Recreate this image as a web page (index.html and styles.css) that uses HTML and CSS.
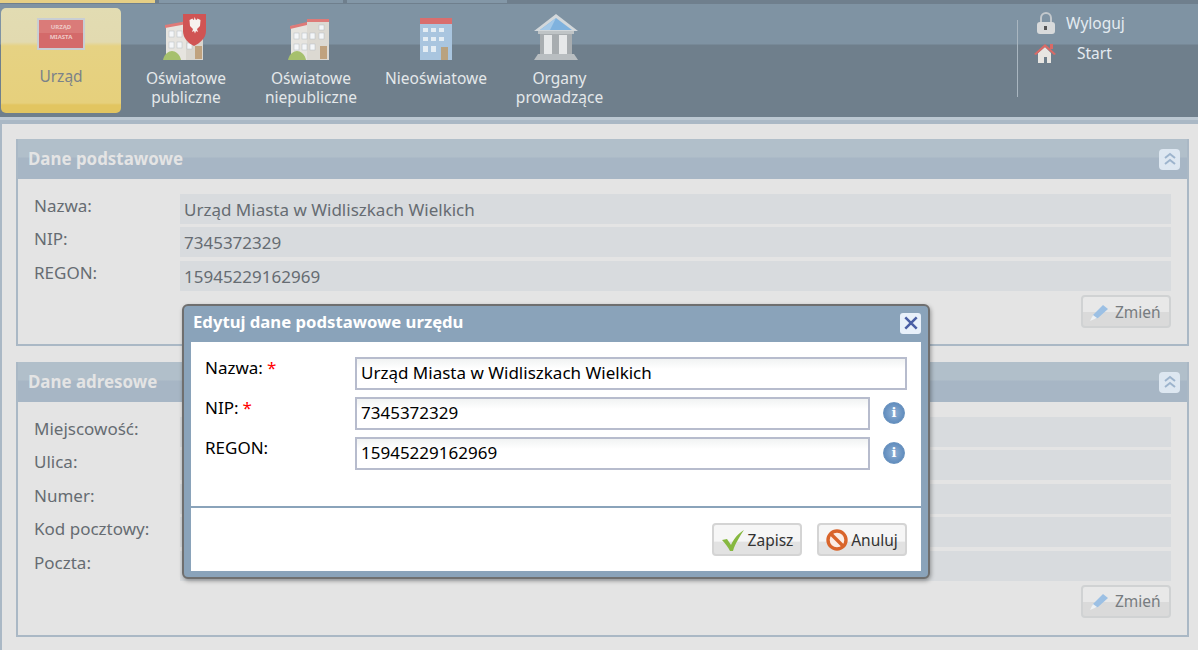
FILE: index.html
```html
<!DOCTYPE html>
<html lang="pl">
<head>
<meta charset="utf-8">
<title>Urząd</title>
<link rel="stylesheet" href="styles.css">
</head>
<body>
<div class="tabs"><span class="tab tab-active"></span><span class="tab tab-mid"></span><span class="tab tab-rest"></span></div>
<header class="topbar">
  <nav class="nav">
    <a class="nav-item nav-active">
      <svg class="nav-icon" width="50" height="34" viewBox="0 0 50 34"><rect x="1" y="1" width="48" height="32" fill="#c9ced3"/><rect x="3" y="3" width="44" height="28" fill="#d46a6a"/><rect x="3" y="3" width="44" height="13" fill="#da7b79"/><text class="sign" x="25" y="12" text-anchor="middle">URZĄD</text><text class="sign" x="25" y="22" text-anchor="middle">MIASTA</text></svg>
      <span>Urząd</span>
    </a>
    <a class="nav-item nav-w1">
      <svg class="nav-icon-lg" width="48" height="50" viewBox="0 0 48 50"><path d="M4 13l20-4v38H4z" fill="#e6e4df"/><path d="M24 15h17v32H24z" fill="#d9d6cf"/><path d="M3 12l22-4v3L3 15z" fill="#de7a78"/><g fill="#f4f6f8" stroke="#b4bcc2" stroke-width=".5"><rect x="7" y="18" width="5" height="6"/><rect x="15" y="18" width="5" height="6"/><rect x="7" y="29" width="5" height="6"/><rect x="15" y="29" width="5" height="6"/><rect x="25" y="30" width="5" height="6"/></g><rect x="33" y="33" width="7" height="13" fill="#c0a27e"/><path d="M1 47c1-6 6-9 9-9s8 3 9 9z" fill="#a6c06d"/><path d="M21 1h23v17c0 7-6 12-12 15-6-3-11-8-11-15z" fill="#d05454"/><path d="M32.500 4l1.500 3 1-.5 .5-1 3 1.500-.5 6-3 3 1 3-2-1-1 2.500-1-2.500-2 1 1-3-3-3-.5-6 3-1.500 .5 1 1 .5z" fill="#f6f1ee"/></svg>
      <span>Oświatowe<br>publiczne</span>
    </a>
    <a class="nav-item nav-w2">
      <svg class="nav-icon-lg" width="48" height="50" viewBox="0 0 48 50"><path d="M4 13l20-3v37H4z" fill="#e6e4df"/><path d="M20 8h22v39H20z" fill="#dcd9d2"/><path d="M3 13l17-4v3L3 16z" fill="#de7a78"/><path d="M20 6h22v3H20z" fill="#de7a78"/><g fill="#f4f6f8" stroke="#b4bcc2" stroke-width=".5"><rect x="7" y="20" width="5" height="6"/><rect x="15" y="20" width="5" height="6"/><rect x="23" y="20" width="5" height="6"/><rect x="32" y="20" width="5" height="6"/><rect x="7" y="31" width="5" height="6"/><rect x="15" y="31" width="5" height="6"/><rect x="23" y="31" width="5" height="6"/><rect x="32" y="12" width="5" height="5"/></g><rect x="33" y="33" width="7" height="13" fill="#c0a27e"/><path d="M1 47c1-6 6-9 9-9s8 3 9 9z" fill="#a6c06d"/></svg>
      <span>Oświatowe<br>niepubliczne</span>
    </a>
    <a class="nav-item nav-w3">
      <svg class="nav-icon-lg" width="48" height="50" viewBox="0 0 48 50"><rect x="8" y="5" width="32" height="42" fill="#a9c5df"/><rect x="8" y="5" width="32" height="6" fill="#d96e6e"/><g fill="#e4edf4"><rect x="11" y="15" width="5" height="4"/><rect x="19" y="15" width="5" height="4"/><rect x="27" y="15" width="5" height="4"/><rect x="11" y="24" width="5" height="4"/><rect x="19" y="24" width="5" height="4"/><rect x="27" y="24" width="5" height="4"/><rect x="11" y="33" width="5" height="6"/><rect x="19" y="33" width="5" height="6"/></g><rect x="29" y="34" width="7" height="13" fill="#b9a27f"/></svg>
      <span>Nieoświatowe</span>
    </a>
    <a class="nav-item nav-w4">
      <svg class="nav-icon-lg nav-icon-shift" width="48" height="50" viewBox="0 0 48 50"><path d="M24 1L46 18H2z" fill="#d3d8db"/><path d="M24 5L40 17H8z" fill="#7fb2de"/><path d="M24 5l-6 12H8z" fill="#a4c9e8"/><rect x="6" y="18" width="36" height="3" fill="#bfc4c6"/><rect x="8" y="21" width="32" height="20" fill="#a8adb0"/><g fill="#e6e8e9"><rect x="12" y="22" width="8" height="19"/><rect x="27" y="22" width="8" height="19"/></g><path d="M6 41h36l4 6H2z" fill="#b9bec1"/></svg>
      <span>Organy<br>prowadzące</span>
    </a>
  </nav>
  <div class="user-menu">
    <a class="user-link">
      <svg width="20" height="23" viewBox="0 0 20 23"><path d="M5 11V6a5 5 0 0 1 10 0v5" fill="none" stroke="#c3c8cc" stroke-width="2"/><rect x="1" y="10" width="18" height="12" rx="3" fill="#d8dadb"/><rect x="8" y="14" width="3" height="4" fill="#555"/></svg>
      <span>Wyloguj</span>
    </a>
    <a class="user-link user-link-home">
      <svg width="22" height="21" viewBox="0 0 22 21"><path d="M4 10v10h6v-6h3v6h4V10l-6-6z" fill="#e8e6e2"/><path d="M0 11L11 1l11 10-2 1-9-8-9 8z" fill="#d96a66"/><rect x="16" y="1" width="3" height="5" fill="#d96a66"/></svg>
      <span>Start</span>
    </a>
  </div>
</header>
<main class="content">
  <section class="panel panel-basic">
    <h2 class="panel-title">Dane podstawowe<span class="collapse"><svg width="14" height="14" viewBox="0 0 14 14"><path d="M2 6l5-4 5 4M2 12l5-4 5 4" fill="none" stroke="#9db4cd" stroke-width="2"/></svg></span></h2>
    <div class="panel-body">
      <div class="row"><span class="label">Nazwa:</span><span class="value">Urząd Miasta w Widliszkach Wielkich</span></div>
      <div class="row"><span class="label">NIP:</span><span class="value">7345372329</span></div>
      <div class="row"><span class="label">REGON:</span><span class="value">15945229162969</span></div>
      <div class="actions"><button class="btn-change"><svg width="22" height="20" viewBox="0 0 22 20"><path d="M4 13L14 3l5 4-10 9-6 1z" fill="#9cc0e4"/><path d="M1 19l3-6 4 3z" fill="#eef1f3"/></svg>Zmień</button></div>
    </div>
  </section>
  <section class="panel panel-address">
    <h2 class="panel-title">Dane adresowe<span class="collapse"><svg width="14" height="14" viewBox="0 0 14 14"><path d="M2 6l5-4 5 4M2 12l5-4 5 4" fill="none" stroke="#9db4cd" stroke-width="2"/></svg></span></h2>
    <div class="panel-body">
      <div class="row"><span class="label">Miejscowość:</span><span class="value"></span></div>
      <div class="row"><span class="label">Ulica:</span><span class="value"></span></div>
      <div class="row"><span class="label">Numer:</span><span class="value"></span></div>
      <div class="row"><span class="label">Kod pocztowy:</span><span class="value"></span></div>
      <div class="row"><span class="label">Poczta:</span><span class="value"></span></div>
      <div class="actions"><button class="btn-change"><svg width="22" height="20" viewBox="0 0 22 20"><path d="M4 13L14 3l5 4-10 9-6 1z" fill="#9cc0e4"/><path d="M1 19l3-6 4 3z" fill="#eef1f3"/></svg>Zmień</button></div>
    </div>
  </section>
</main>
<div class="dialog">
  <div class="dialog-head">
    <span>Edytuj dane podstawowe urzędu</span>
    <span class="dialog-close"><svg width="16" height="16" viewBox="0 0 14 14"><path d="M2 2l10 10M12 2L2 12" stroke="#4a5fa5" stroke-width="2.2" fill="none"/></svg></span>
  </div>
  <div class="dialog-form">
    <div class="field"><label class="field-label">Nazwa:<i>*</i></label><span class="input input-wide">Urząd Miasta w Widliszkach Wielkich</span></div>
    <div class="field"><label class="field-label">NIP:<i>*</i></label><span class="input">7345372329</span><span class="info">i</span></div>
    <div class="field"><label class="field-label">REGON:</label><span class="input">15945229162969</span><span class="info">i</span></div>
  </div>
  <div class="dialog-foot">
    <button class="btn"><svg width="24" height="24" viewBox="0 0 24 24"><path d="M1 12l5-1 4 6C13 10 18 5 23 2c-4 6-9 14-11 21H9C7 19 4 15 1 12z" fill="#86b840"/></svg>Zapisz</button>
    <button class="btn"><svg width="22" height="22" viewBox="0 0 22 22"><circle cx="11" cy="11" r="9" fill="#fbeee6" stroke="#d9652b" stroke-width="3.4"/><path d="M5 5l12 12" stroke="#d9652b" stroke-width="3.4"/></svg>Anuluj</button>
  </div>
</div>
</body>
</html>
```
FILE: styles.css
```css
* { box-sizing: border-box; }
html, body { margin: 0; height: 650px; overflow: hidden; }
body { background: #e4e4e4; font-family: "Noto Sans", "DejaVu Sans", sans-serif; font-size: 17px; position: relative; }
.tabs { display: flex; height: 4px; gap: 4px; background: #6f7f8d; }
.tab { display: block; height: 3px; }
.tab-active { width: 155px; background: #e6cf85; }
.tab-mid { width: 184px; background: #8397a7; }
.tab-rest { width: 160px; background: #8397a7; }
.topbar { height: 116px; display: flex; border-bottom: 3px solid #bcc8d2; background: linear-gradient(#7f93a3 0, #7f93a3 40px, #6f7f8c 41px, #6f7f8c 100%); }
.nav { display: flex; flex: 1; padding-left: 1px; padding-top: 4px; align-items: flex-start; }
.nav-item { display: flex; flex-direction: column; align-items: center; text-align: center; color: #e4e8ea; line-height: 19px; font-size: 15.5px; }
.nav-active { width: 120px; height: 105px; background: linear-gradient(#e2dcb2 0, #e2dab0 34px, #e6d283 38px, #e6d07c 95px, #e2c560 97px); border-radius: 5px; color: #7b8289; }
.nav-active .nav-icon { margin-top: 9px; }
.nav-active span { margin-top: 16px; }
.sign { font: 700 6px "Noto Sans", sans-serif; fill: #eec9c6; }
.nav-w1, .nav-w2, .nav-w3, .nav-w4 { padding-top: 5px; }
.nav-icon-lg { margin-bottom: 6px; }
.nav-icon-shift { margin-left: -8px; }
.nav-w1 { width: 130px; }
.nav-w2 { width: 120px; }
.nav-w3 { width: 130px; }
.nav-w4 { width: 117px; }
.user-menu { width: 180px; margin: 4px 0 0; padding-left: 18px; position: relative; }
.user-menu::before { content: ""; position: absolute; left: -1px; top: 12px; width: 1px; height: 77px; background: #a9b6c0; }
.user-link { display: flex; align-items: center; color: #e4ebf1; height: 30px; font-size: 15.5px; gap: 10px; }
.user-link-home { gap: 21px; margin-left: -2px; }
.content { height: 530px; margin: 0; padding: 15px 0 0 14px; border-top: 4px solid #aab8c5; border-left: 2px solid #aab8c5; display: flex; flex-direction: column; gap: 16px; }
.panel { width: 1173px; flex: none; border: 2px solid #aab8c5; border-top: 0; }
.panel-basic { height: 207px; }
.panel-address { height: 275px; }
.panel-title { margin: 0; height: 40px; display: flex; justify-content: space-between; align-items: center; padding: 0 7px 0 10px; background: linear-gradient(#b1bfca, #b1bfca 18px, #a7b6c5 19px); color: #e4e4e4; font-size: 16.9px; font-weight: 700; }
.panel-title { line-height: 36px; }
.collapse { width: 21px; height: 21px; background: #dde7f1; border-radius: 4px; display: flex; align-items: center; justify-content: center; }
.panel-body { padding: 15px 0 0 16px; }
.row { display: flex; height: 30px; margin-bottom: 3.4px; color: #666c72; }
.label { width: 146px; line-height: 24px; }
.value { width: 991px; background: #d8dbde; padding-left: 4px; line-height: 32px; }
.actions { display: flex; justify-content: flex-end; padding-right: 16px; padding-top: 1px; }
.btn-change { display: flex; align-items: center; width: 90px; height: 33px; border: 2px solid #d0d2d3; border-radius: 4px; background: linear-gradient(#e8e8e8 50%, #dadada 51%); color: #777c80; font: inherit; font-size: 15.5px; padding: 0 0 0 6px; gap: 4px; }
.dialog { position: absolute; left: 182px; top: 304px; width: 748px; height: 275px; border: 2px solid #6f6f6f; border-radius: 6px; background: #8aa3ba; padding: 0 7px 6px; box-shadow: 1px 2px 4px rgba(0,0,0,.35); display: flex; flex-direction: column; }
.dialog-head { height: 36px; flex: none; display: flex; justify-content: space-between; align-items: center; padding: 0 0 2px 2px; color: #fff; font-weight: 700; font-size: 16.7px; line-height: 22px; }
.dialog-head > span:first-child { margin-top: -2px; }
.dialog-close { width: 21px; height: 21px; background: #e8f0fa; border-radius: 3px; display: flex; align-items: center; justify-content: center; }
.dialog-form { background: #fff; height: 166px; padding: 15px 14px 0 14px; border-bottom: 2px solid #8aa3ba; }
.field { display: flex; height: 40px; color: #000; align-items: flex-start; }
.field-label { width: 150px; line-height: 22px; }
.field-label i { color: #f00; font-style: normal; margin-left: 4px; }
.input { display: block; width: 515px; height: 33px; border: 2px solid #b7bccd; background: linear-gradient(#f1f3f3, #fff 10px); padding-left: 4px; line-height: 28px; color: #000; }
.input-wide { width: 552px; }
.info { width: 22px; height: 22px; margin: 5px 0 0 13px; border-radius: 50%; background: radial-gradient(#8fb0d4, #4f7fb5); border: 1px solid #6a93bf; color: #fff; font: 700 13px/20px "DejaVu Serif", serif; text-align: center; }
.dialog-foot { flex: 1; background: #fff; display: flex; justify-content: flex-end; gap: 15px; padding: 15px 14px 0 0; }
.btn { display: flex; align-items: center; justify-content: center; gap: 3px; width: 90px; height: 33px; border: 2px solid #d4d4d4; border-radius: 4px; background: linear-gradient(#f6f6f6 55%, #e2e2e2 60%); color: #333; font: inherit; font-size: 15.5px; padding: 0; }
```
